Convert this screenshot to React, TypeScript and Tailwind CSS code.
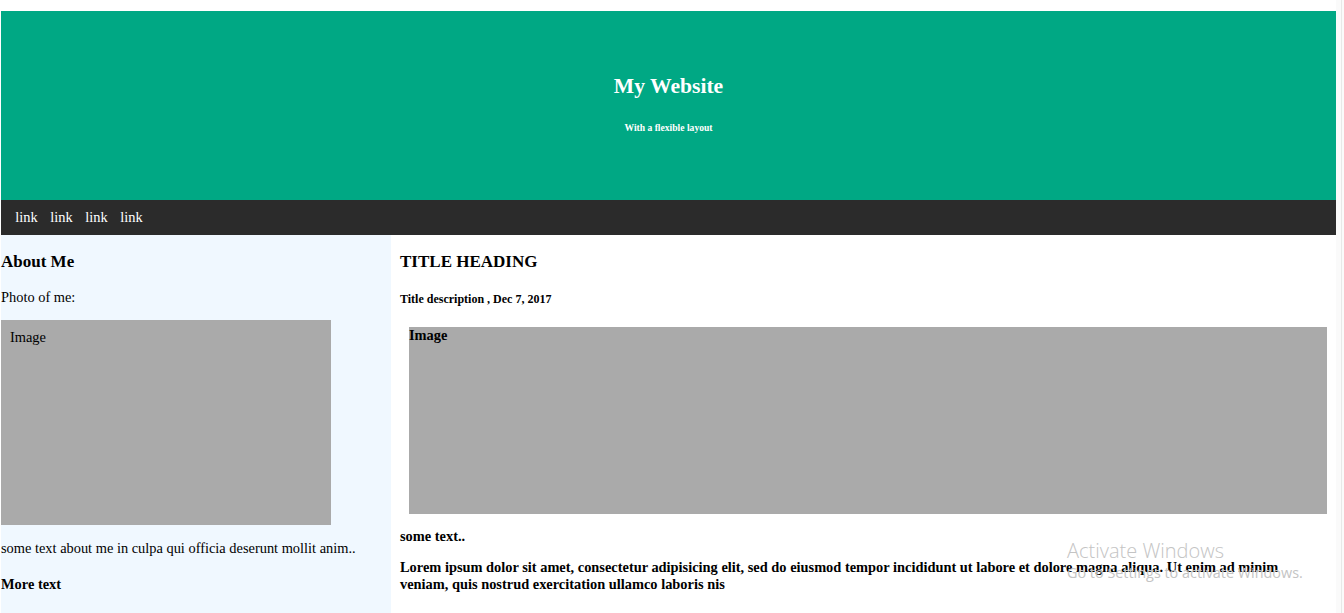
export default function App() {
  return (
    <div className="relative w-[1344px] h-[613px] overflow-hidden bg-white flex font-['Liberation_Serif','Times_New_Roman',serif] text-black">
      {/* page */}
      <div className="w-[1336px] pl-px pt-[11px] flex flex-col">
        {/* header */}
        <header className="h-[189px] bg-[#00a884] text-white text-center pt-[45px]">
          <h2 className="mt-[18px] text-[21.6px] leading-[25px] font-bold">My Website</h2>
          <h6 className="mt-[23px] text-[9.6px] leading-[11px] font-bold">With a flexible layout</h6>
        </header>

        {/* nav */}
        <nav className="h-[35px] bg-[#2b2b2b] flex items-center pl-[8px] text-[14.4px] leading-[17px] text-white">
          <a className="px-[6.3px]">link</a>
          <a className="px-[6.3px]">link</a>
          <a className="px-[6.3px]">link</a>
          <a className="px-[6.3px]">link</a>
        </nav>

        <div className="flex flex-1 min-h-0">
          {/* left column */}
          <aside className="w-[390px] bg-[#f0f8ff] text-[14.4px] leading-[17px]">
            <h3 className="mt-[16.6px] text-[17px] leading-[20px] font-bold">About Me</h3>
            <p className="mt-[17px]">Photo of me:</p>
            <div className="mt-[14.4px] w-[330px] h-[205px] bg-[#aaaaaa] p-[9px]">Image</div>
            <p className="mt-[14.6px]">some text about me in culpa qui officia deserunt mollit anim..</p>
            <h4 className="mt-[19.2px] font-bold">More text</h4>
          </aside>

          {/* main column */}
          <main className="flex-1 bg-white px-[9px] text-[14.4px] leading-[17px]">
            <h3 className="mt-[16.6px] text-[17px] leading-[20px] font-bold">TITLE HEADING</h3>
            <h5 className="mt-[20px] text-[12px] leading-[14px] font-bold">Title description , Dec 7, 2017</h5>
            <div className="mt-[21px] ml-[9px] h-[187px] bg-[#aaaaaa] font-bold">Image</div>
            <p className="mt-[14.3px] font-bold">some text..</p>
            <p className="mt-[14.4px] font-bold">
              Lorem ipsum dolor sit amet, consectetur adipisicing elit, sed do eiusmod tempor incididunt ut labore et dolore magna aliqua. Ut enim ad minim veniam, quis nostrud exercitation ullamco laboris nis
            </p>
          </main>
        </div>
      </div>

      {/* scrollbar strip */}
      <div className="w-[8px] bg-[#fafafa] flex justify-end pr-[2px]">
        <div className="w-px bg-[#e8e8e8]" />
      </div>

      {/* windows watermark */}
      <div className="absolute left-[1067px] top-[539px] font-['Open_Sans','Noto_Sans',sans-serif] text-[#c4c4c4] pointer-events-none whitespace-nowrap">
        <div className="text-[20px] leading-[24px] font-light">Activate Windows</div>
        <div className="text-[14.4px] leading-[18px] mt-[1.4px]">Go to Settings to activate Windows.</div>
      </div>
    </div>
  );
}
